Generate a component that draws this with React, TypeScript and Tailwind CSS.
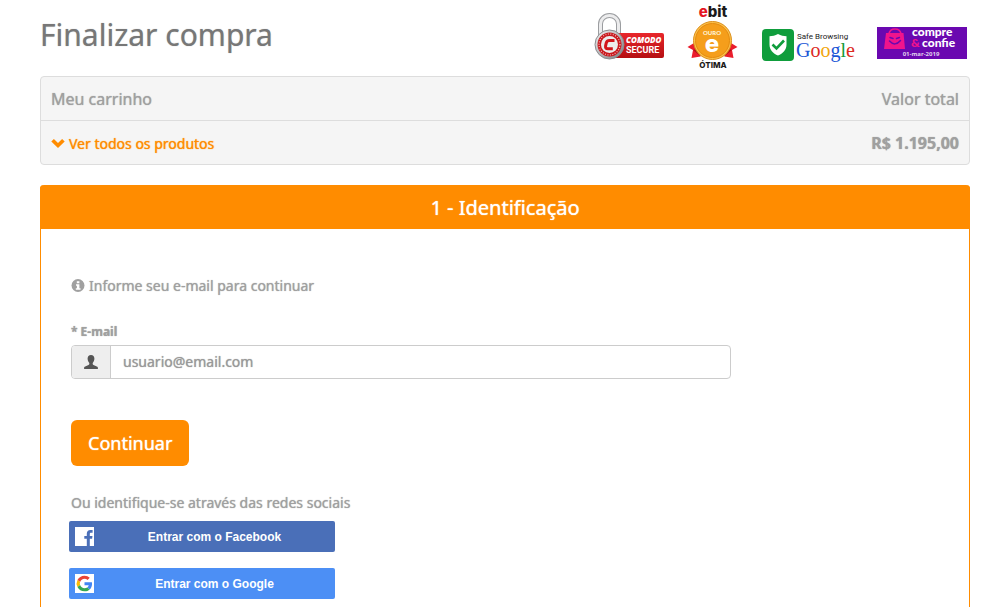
import { useState } from "react";

function ComodoSeal() {
  return (
    <svg width="72" height="76" viewBox="0 0 72 76" role="img" aria-label="Comodo Secure">
      <defs>
        <linearGradient id="comodoRed" x1="0" y1="0" x2="0" y2="1">
          <stop offset="0" stopColor="#e8262b" />
          <stop offset="1" stopColor="#b50f12" />
        </linearGradient>
        <linearGradient id="comodoSteel" x1="0" y1="0" x2="1" y2="1">
          <stop offset="0" stopColor="#f7f7f7" />
          <stop offset="1" stopColor="#77797c" />
        </linearGradient>
      </defs>
      <path d="M6.500 36V24a9 8.500 0 0 1 18 0v12" fill="none" stroke="#9b9da0" strokeWidth="5" />
      <path d="M6.500 36V24a9 8.500 0 0 1 18 0v12" fill="none" stroke="#ececed" strokeWidth="3" />
      <rect x="16" y="33" width="54" height="25" rx="2" fill="url(#comodoRed)" />
      <circle cx="15.500" cy="44.500" r="14.500" fill="url(#comodoSteel)" stroke="#8a8c8f" strokeWidth="1" />
      <circle cx="15.500" cy="44.500" r="12" fill="#c9181d" />
      <circle cx="15.500" cy="44.500" r="10.500" fill="none" stroke="#f4b9ba" strokeWidth="1.200" strokeDasharray="1 1.500" />
      <circle cx="15.500" cy="44.500" r="8.500" fill="#ececec" />
      <path d="M20.500 40.500h-5q-2.800 0-3.300 2.600l-.6 2.800q-.5 2.800 2.200 2.800h5" fill="none" stroke="#d2151b" strokeWidth="3" />
      <text x="32" y="43" fontFamily="Open Sans, sans-serif" fontSize="8" fontWeight="800" fontStyle="italic" fill="#fff">COMODO</text>
      <text x="32" y="53" fontFamily="Liberation Sans Narrow, Roboto, sans-serif" fontSize="9" fontWeight="700" fill="#fff">SECURE</text>
    </svg>
  );
}

function EbitSeal() {
  return (
    <svg width="54" height="76" viewBox="0 0 54 76" role="img" aria-label="Ebit Ouro Ótima">
      <text x="27" y="17" textAnchor="middle" fontFamily="Inter, sans-serif" fontSize="15" fontWeight="800" fill="#1c1a1a">
        <tspan fill="#e5141f">e</tspan>bit
      </text>
      <path d="M8 43L1.500 47l5.500 3-1.500 8 9-1.500zM45 43l6.500 4-5.500 3 1.500 8-9-1.500z" fill="#ea1d2c" />
      <path d="M7 50l8 6.500-3-8zM46 50l-8 6.500 3-8z" fill="#b01018" />
      <circle cx="26.500" cy="40.500" r="19" fill="#fbc04a" stroke="#dc8f1c" strokeWidth="1" />
      <circle cx="26.500" cy="40.500" r="17" fill="#f59e1b" stroke="#e58c10" strokeWidth="1" />
      <text x="26" y="35" textAnchor="middle" fontFamily="Lato, sans-serif" fontSize="6" fontWeight="900" fill="#fff3d6">OURO</text>
      <text x="26" y="52" textAnchor="middle" fontFamily="Inter, sans-serif" fontSize="24" fontWeight="800" fill="#fff">e</text>
      <text x="27" y="68" textAnchor="middle" fontFamily="Inter, sans-serif" fontSize="8" fontWeight="800" fill="#1c1a1a">ÓTIMA</text>
    </svg>
  );
}

function SafeBrowsingSeal() {
  return (
    <svg width="97" height="76" viewBox="0 0 97 76" role="img" aria-label="Google Safe Browsing">
      <rect x="2" y="29" width="32" height="32" rx="4" fill="#0f9d3c" />
      <path d="M18 34c3 1.600 5.500 2.200 8.500 2.200v8.300c0 5.500-3.500 9-8.500 11-5-2-8.500-5.500-8.500-11v-8.300c3 0 5.500-.6 8.500-2.200z" fill="#fff" />
      <path d="M12.500 44.500l4 4 7.500-8" fill="none" stroke="#0f9d3c" strokeWidth="2.600" />
      <text x="37" y="39" fontFamily="Roboto, sans-serif" fontSize="8" fill="#222">Safe Browsing</text>
      <text x="36" y="57" fontFamily="Liberation Serif, serif" fontSize="20">
        <tspan fill="#1a56d6">G</tspan>
        <tspan fill="#dc2a1e">o</tspan>
        <tspan fill="#f2a60d">o</tspan>
        <tspan fill="#1a56d6">g</tspan>
        <tspan fill="#159b3a">l</tspan>
        <tspan fill="#dc2a1e">e</tspan>
      </text>
    </svg>
  );
}

function CompreConfieSeal() {
  return (
    <svg width="93" height="76" viewBox="0 0 93 76" role="img" aria-label="Compre e Confie">
      <rect x="0" y="27" width="90" height="32" fill="#6a08b0" />
      <path d="M12 33.500q1-4.500 6-4.500t6 4.500" fill="none" stroke="#f0148c" strokeWidth="1.600" />
      <path d="M9 33h17.500L28 49H7z" fill="#f0148c" />
      <path d="M13 37.500l3 1M22.500 37.500l-3 1M12.500 41q5.500 6 11-.5" fill="none" stroke="#6a08b0" strokeWidth="1.500" strokeLinecap="round" />
      <text fontFamily="Lato, sans-serif" fontSize="12" fontWeight="900" fill="#fff">
        <tspan x="35" y="36">compre</tspan>
        <tspan x="34" y="47" fill="#f0148c">&amp;</tspan>
        <tspan x="45" y="47">confie</tspan>
      </text>
      <text x="44" y="56" textAnchor="middle" fontFamily="Open Sans, sans-serif" fontSize="6" fontWeight="700" fill="#e0d0ee">01-mar-2019</text>
    </svg>
  );
}

function ChevronDownIcon() {
  return (
    <svg width="14" height="14" viewBox="0 0 14 14" aria-hidden="true">
      <path d="M.3 4.500l2.600-2.600L7 6l4.100-4.100 2.600 2.600L7 11z" fill="currentColor" />
    </svg>
  );
}

function InfoIcon() {
  return (
    <svg width="14" height="14" viewBox="0 0 14 14" aria-hidden="true">
      <circle cx="7" cy="6.500" r="6.500" fill="currentColor" />
      <path d="M5.800 2.200h2.600v2H5.800zM5 5.300h3.400v4h1.100v1.500H4.800V9.300h1.100V6.800H5z" fill="#fff" />
    </svg>
  );
}

function UserIcon() {
  return (
    <svg width="14" height="14" viewBox="0 0 14 14" aria-hidden="true">
      <path
        d="M7 0c2.200 0 3.400 1.500 3.400 3.600 0 1.800-.7 3.400-1.700 4.300v1.200c0 .5.300.7.800.9l3.300 1.400c.8.300 1.100.8 1.100 1.500V14H.1v-1.100c0-.7.300-1.200 1.100-1.500L4.500 10c.5-.2.800-.4.800-.9V7.900c-1-.9-1.700-2.500-1.700-4.300C3.600 1.500 4.800 0 7 0z"
        fill="currentColor"
      />
    </svg>
  );
}

function FacebookIcon() {
  return (
    <svg width="19" height="19" viewBox="0 0 19 19" aria-hidden="true">
      <path d="M0 0h19v19h-4.200v-7.200h2.300l.4-2.900h-2.700V7.200c0-.9.300-1.400 1.400-1.400h1.400V3.100c-.3 0-1.200-.1-2.200-.1-2.300 0-3.600 1.400-3.600 3.800v2.100H9.300v2.900h2.500V19H0z" fill="#fff" />
    </svg>
  );
}

function GoogleIcon() {
  return (
    <svg width="19" height="19" viewBox="-5 -5 58 58" aria-hidden="true">
      <path d="M-5-5h58v58H-5z" fill="#fff" />
      <path d="M24 9.500c3.540 0 6.710 1.220 9.210 3.600l6.850-6.850C35.900 2.380 30.470 0 24 0 14.620 0 6.510 5.380 2.560 13.220l7.980 6.190C12.430 13.720 17.740 9.500 24 9.500z" fill="#ea4335" />
      <path d="M46.980 24.550c0-1.570-.15-3.090-.38-4.550H24v9.020h12.940c-.58 2.960-2.260 5.480-4.780 7.180l7.730 6c4.510-4.180 7.090-10.360 7.090-17.650z" fill="#4285f4" />
      <path d="M10.530 28.590a14.500 14.500 0 0 1 0-9.180l-7.980-6.190a24 24 0 0 0 0 21.560z" fill="#fbbc05" />
      <path d="M24 48c6.480 0 11.930-2.130 15.890-5.810l-7.730-6c-2.150 1.450-4.920 2.300-8.160 2.300-6.260 0-11.570-4.220-13.470-9.910l-7.980 6.190C6.510 42.620 14.620 48 24 48z" fill="#34a853" />
    </svg>
  );
}

export default function App() {
  const [email, setEmail] = useState("");

  return (
    <div className="flex min-h-screen flex-col bg-white pl-10 pr-[22px] font-['Noto_Sans',sans-serif] text-sm text-[#a0a0a0]">
      {/* HEADER */}
      <header className="flex items-center justify-between">
        <h1 className="pb-1.5 text-[30px] text-[#777] [text-shadow:0_0_1px_#aaa]">Finalizar compra</h1>
        <div className="flex gap-5">
          <ComodoSeal />
          <EbitSeal />
          <SafeBrowsingSeal />
          <CompreConfieSeal />
        </div>
      </header>

      {/* CART */}
      <div className="rounded border border-[#ddd] bg-[#f5f5f5] [text-shadow:0_0_1px_#a0a0a0]">
        <table className="w-full text-base">
          <thead>
            <tr className="h-[43px] border-b border-[#ddd]">
              <th className="px-2.5 pt-0.5 text-left font-normal">Meu carrinho</th>
              <th className="px-2.5 pt-0.5 text-right font-normal">Valor total</th>
            </tr>
          </thead>
          <tbody>
            <tr className="h-11">
              <td className="px-2.5 pt-0.5">
                <button type="button" className="flex items-center gap-1 pt-0.5 text-sm text-[#ff8c00] [text-shadow:0_0_1px_#ff8c00]">
                  <ChevronDownIcon />
                  Ver todos os produtos
                </button>
              </td>
              <td className="px-2.5 pt-0.5 text-right font-bold">R$ 1.195,00</td>
            </tr>
          </tbody>
        </table>
      </div>

      {/* IDENTIFICATION */}
      <section className="mt-5 flex-1 rounded-t border-x border-[#ff8c00] [text-shadow:0_0_1px_#a0a0a0]">
        <h2 className="-mx-px flex h-11 items-center justify-center rounded-t bg-[#ff8c00] pt-0.5 text-xl text-white [text-shadow:0_0_1px_#fff]">
          1 - Identificação
        </h2>
        <form className="px-[30px] pt-[47px]" onSubmit={(e) => e.preventDefault()}>
          <p className="flex items-center gap-1">
            <InfoIcon />
            Informe seu e-mail para continuar
          </p>

          <label htmlFor="email" className="mt-[27px] block text-xs leading-[18px] font-bold">
            * E-mail
          </label>
          <div className="mt-1 flex h-[34px] max-w-[660px] overflow-hidden rounded border border-[#ccc]">
            <span className="flex w-[39px] items-center justify-center border-r border-[#ccc] bg-[#eee] text-[#555]">
              <UserIcon />
            </span>
            <input
              id="email"
              type="email"
              placeholder="usuario@email.com"
              value={email}
              onChange={(e) => setEmail(e.target.value)}
              className="min-w-0 flex-1 px-3 text-[#555] outline-none [text-shadow:0_0_1px_#a0a0a0] placeholder:text-[#999]"
            />
          </div>

          <button
            type="submit"
            className="mt-[41px] h-[46px] rounded-md bg-[#ff8c00] px-[17px] text-lg text-white [text-shadow:0_0_1px_#fff]"
          >
            Continuar
          </button>

          <p className="mt-[27px]">Ou identifique-se através das redes sociais</p>
          <div className="-ml-0.5 mt-2 flex w-[266px] flex-col gap-4 font-['Liberation_Sans',sans-serif] text-xs font-bold text-white [text-shadow:none]">
            <button type="button" className="flex h-[31px] items-center rounded-xs bg-[#4a6fb8] pl-1.5">
              <FacebookIcon />
              <span className="flex-1">Entrar com o Facebook</span>
            </button>
            <button type="button" className="flex h-[31px] items-center rounded-xs bg-[#4c8ff5] pl-1.5">
              <GoogleIcon />
              <span className="flex-1">Entrar com o Google</span>
            </button>
          </div>
        </form>
      </section>
    </div>
  );
}
